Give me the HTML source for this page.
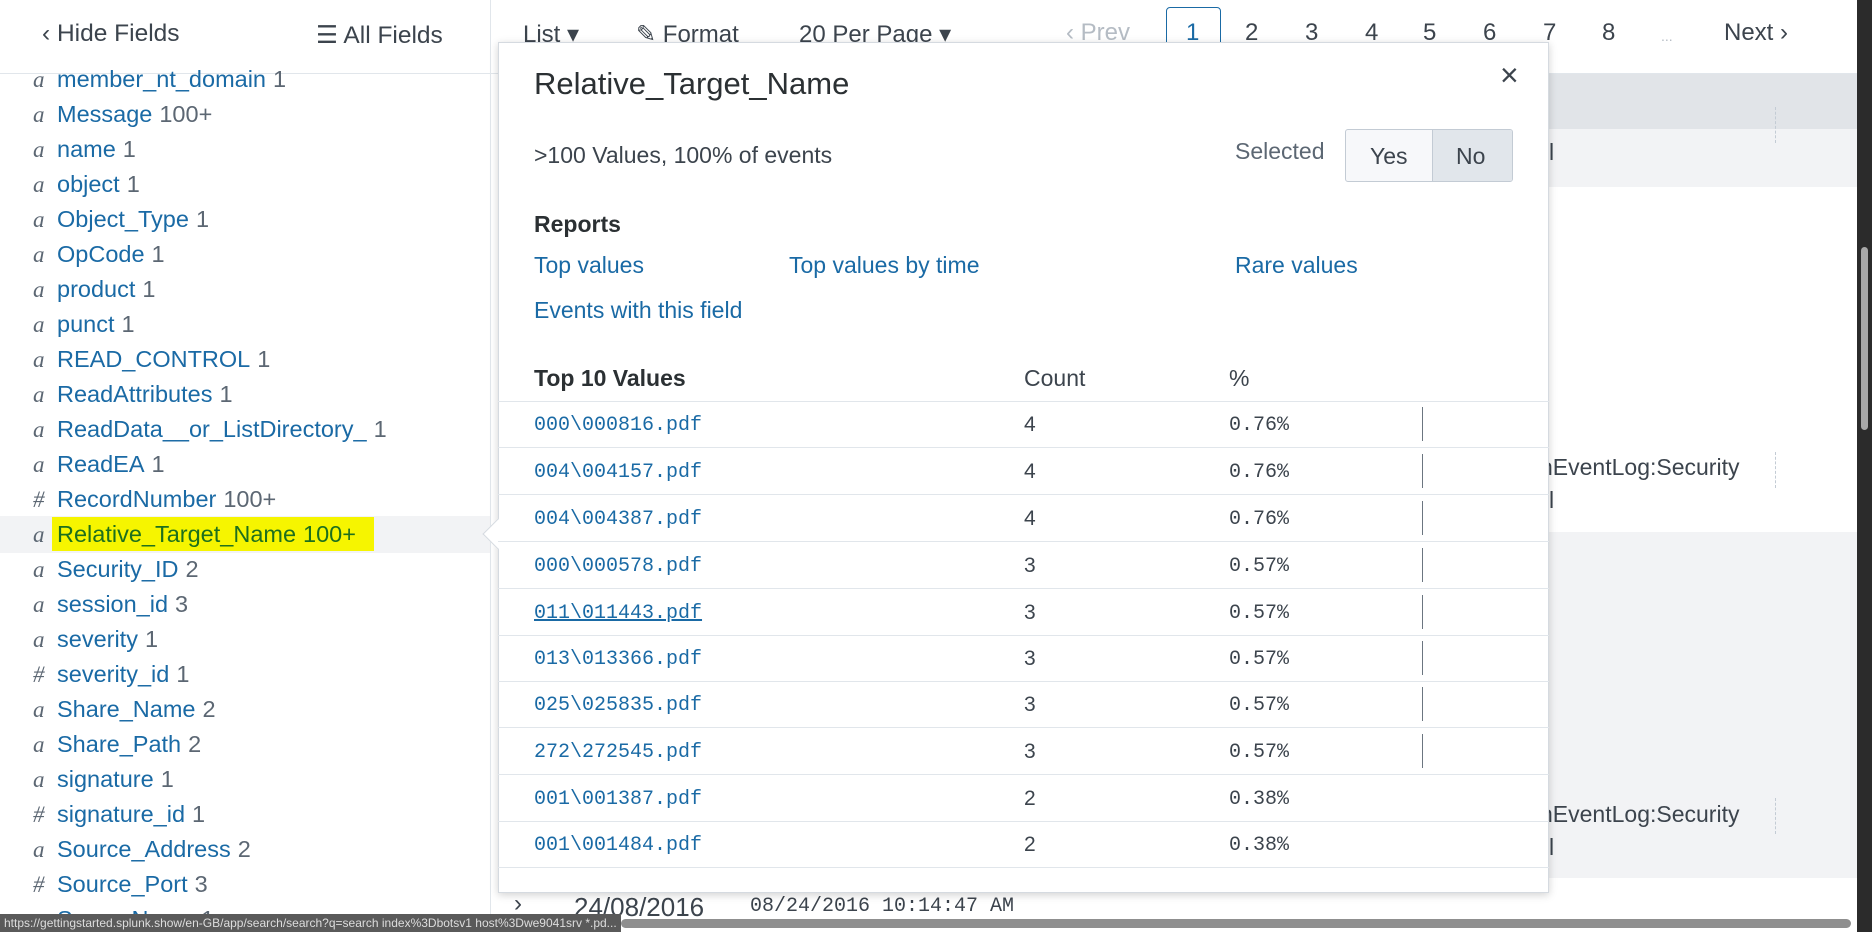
<!DOCTYPE html>
<html><head><meta charset="utf-8"><style>
*{margin:0;padding:0;box-sizing:border-box}
body{width:1872px;height:932px;overflow:hidden;background:#fff;font-family:"Liberation Sans",sans-serif;color:#3c444d;position:relative}
.a{position:absolute;white-space:nowrap}
.lnk{color:#1a6aa5}
.mono{font-family:"Liberation Mono",monospace}
.f{position:absolute;left:33px;font-size:23.5px;line-height:35px;height:35px;white-space:nowrap}
.f i{font-family:"Liberation Serif",serif;color:#5c6773;font-size:23px;margin-right:8px;display:inline-block;width:16px}
.f b{font-weight:normal;color:#1a6aa5}
.f s{text-decoration:none;color:#5c6773;margin-left:7px}
.row{position:absolute;left:498px;width:1051px;border-bottom:1px solid #e1e6eb;height:47px}
.row .v{position:absolute;left:36px;top:13px;font-size:20px;color:#1a6aa5}
.row .c{position:absolute;left:526px;top:12px;font-size:21px}
.row .p{position:absolute;left:731px;top:13px;font-size:20px}
.row .bar{position:absolute;left:924px;top:6px;width:1px;height:34px;background:#6b7580}
.pg{position:absolute;top:19px;font-size:24px;color:#3c444d}
.t{font-size:23px}
</style></head><body>
<div class="a" style="left:1549px;top:74px;width:308px;height:55px;background:#e1e4e8"></div>
<div class="a" style="left:1549px;top:129px;width:308px;height:58px;background:#f2f3f5"></div>
<div class="a" style="left:1549px;top:532px;width:308px;height:346px;background:#f2f3f5"></div>
<div class="a" style="left:1549px;top:139px;font-size:23px">l</div>
<div class="a" style="left:1540px;top:454px;font-size:23px">nEventLog:Security</div>
<div class="a" style="left:1549px;top:487px;font-size:23px">l</div>
<div class="a" style="left:1540px;top:801px;font-size:23px">nEventLog:Security</div>
<div class="a" style="left:1549px;top:834px;font-size:23px">l</div>
<div class="a" style="left:1775px;top:452px;height:36px;border-left:1px dashed #c3cbd4"></div>
<div class="a" style="left:1775px;top:798px;height:36px;border-left:1px dashed #c3cbd4"></div>
<div class="a" style="left:1775px;top:107px;height:36px;border-left:1px dashed #c3cbd4"></div>
<div class="a" style="left:0;top:73px;width:1857px;height:1px;background:#e1e6eb"></div>
<div class="a" style="left:490px;top:0;width:1px;height:932px;background:#e1e6eb"></div>
<div class="a" style="left:42px;top:20px;font-size:24.5px">‹ Hide Fields</div>
<div class="a" style="left:316px;top:20px;font-size:24.5px">☰ All Fields</div>
<div class="a" style="left:523px;top:20px;font-size:24px">List ▾</div>
<div class="a" style="left:636px;top:20px;font-size:24px">✎ Format</div>
<div class="a" style="left:799px;top:20px;font-size:24px">20 Per Page ▾</div>
<div class="pg" style="left:1066px;color:#b5bcc4">‹ Prev</div>
<div class="a" style="left:1166px;top:7px;width:55px;height:60px;border:1px solid #1a6aa5;border-radius:4px"></div>
<div class="pg" style="left:1186px;color:#1a6aa5">1</div>
<div class="pg" style="left:1245px">2</div><div class="pg" style="left:1305px">3</div><div class="pg" style="left:1365px">4</div><div class="pg" style="left:1423px">5</div><div class="pg" style="left:1483px">6</div><div class="pg" style="left:1543px">7</div><div class="pg" style="left:1602px">8</div>
<div class="pg" style="left:1661px;color:#b5bcc4;font-size:14px;top:28px">...</div>
<div class="pg" style="left:1724px">Next ›</div>
<div class="a" style="left:0;top:516px;width:490px;height:37px;background:#f2f3f5"></div>
<div class="a" style="left:52px;top:517px;width:322px;height:34px;background:#f6f500"></div>
<div class="f" style="top:62px"><i>a</i><b>member_nt_domain</b><s>1</s></div>
<div class="f" style="top:97px"><i>a</i><b>Message</b><s>100+</s></div>
<div class="f" style="top:132px"><i>a</i><b>name</b><s>1</s></div>
<div class="f" style="top:167px"><i>a</i><b>object</b><s>1</s></div>
<div class="f" style="top:202px"><i>a</i><b>Object_Type</b><s>1</s></div>
<div class="f" style="top:237px"><i>a</i><b>OpCode</b><s>1</s></div>
<div class="f" style="top:272px"><i>a</i><b>product</b><s>1</s></div>
<div class="f" style="top:307px"><i>a</i><b>punct</b><s>1</s></div>
<div class="f" style="top:342px"><i>a</i><b>READ_CONTROL</b><s>1</s></div>
<div class="f" style="top:377px"><i>a</i><b>ReadAttributes</b><s>1</s></div>
<div class="f" style="top:412px"><i>a</i><b>ReadData__or_ListDirectory_</b><s>1</s></div>
<div class="f" style="top:447px"><i>a</i><b>ReadEA</b><s>1</s></div>
<div class="f" style="top:482px"><i>#</i><b>RecordNumber</b><s>100+</s></div>
<div class="f" style="top:517px"><i>a</i><b style="color:#1d6f1d">Relative_Target_Name</b><s style="color:#1d6f1d">100+</s></div>
<div class="f" style="top:552px"><i>a</i><b>Security_ID</b><s>2</s></div>
<div class="f" style="top:587px"><i>a</i><b>session_id</b><s>3</s></div>
<div class="f" style="top:622px"><i>a</i><b>severity</b><s>1</s></div>
<div class="f" style="top:657px"><i>#</i><b>severity_id</b><s>1</s></div>
<div class="f" style="top:692px"><i>a</i><b>Share_Name</b><s>2</s></div>
<div class="f" style="top:727px"><i>a</i><b>Share_Path</b><s>2</s></div>
<div class="f" style="top:762px"><i>a</i><b>signature</b><s>1</s></div>
<div class="f" style="top:797px"><i>#</i><b>signature_id</b><s>1</s></div>
<div class="f" style="top:832px"><i>a</i><b>Source_Address</b><s>2</s></div>
<div class="f" style="top:867px"><i>#</i><b>Source_Port</b><s>3</s></div>
<div class="f" style="top:902px"><i>a</i><b>SourceName</b><s>1</s></div>
<div class="a" style="left:514px;top:890px;font-size:24px">›</div>
<div class="a" style="left:574px;top:892px;font-size:26px">24/08/2016</div>
<div class="a mono" style="left:750px;top:895px;font-size:20px">08/24/2016 10:14:47 AM</div>
<div class="a" style="left:498px;top:42px;width:1051px;height:851px;background:#fff;border:1px solid #d5dae0;box-shadow:0 2px 8px rgba(0,0,0,.18)"></div>
<div class="a" style="left:487px;top:523px;width:22px;height:22px;background:#fff;border-left:1px solid #d5dae0;border-bottom:1px solid #d5dae0;transform:rotate(45deg)"></div>
<div class="a" style="left:534px;top:66px;font-size:31px;color:#2b3033">Relative_Target_Name</div>
<div class="a" style="left:1500px;top:57px;font-size:32px;color:#3c444d">×</div>
<div class="a t" style="left:534px;top:142px">&gt;100 Values, 100% of events</div>
<div class="a t" style="left:1235px;top:138px;color:#5c6773">Selected</div>
<div class="a" style="left:1345px;top:129px;width:168px;height:53px;border:1px solid #c3cbd4;border-radius:3px;background:#f7f8fa;overflow:hidden">
<div class="a" style="left:86px;top:0;width:82px;height:53px;background:#e1e6eb;border-left:1px solid #c3cbd4"></div>
<div class="a t" style="left:24px;top:13px">Yes</div>
<div class="a t" style="left:110px;top:13px">No</div></div>
<div class="a t" style="left:534px;top:211px;font-weight:bold;color:#2b3033">Reports</div>
<div class="a lnk t" style="left:534px;top:252px">Top values</div>
<div class="a lnk t" style="left:789px;top:252px">Top values by time</div>
<div class="a lnk t" style="left:1235px;top:252px">Rare values</div>
<div class="a lnk t" style="left:534px;top:297px">Events with this field</div>
<div class="a t" style="left:534px;top:365px;font-weight:bold;color:#2b3033">Top 10 Values</div>
<div class="a t" style="left:1024px;top:365px">Count</div>
<div class="a t" style="left:1229px;top:365px">%</div>
<div class="a" style="left:498px;top:401px;width:1051px;height:1px;background:#e1e6eb"></div>
<div class="row" style="top:401px"><span class="a v mono">000\000816.pdf</span><span class="a c">4</span><span class="a p mono">0.76%</span><span class="bar"></span></div>
<div class="row" style="top:448px"><span class="a v mono">004\004157.pdf</span><span class="a c">4</span><span class="a p mono">0.76%</span><span class="bar"></span></div>
<div class="row" style="top:495px"><span class="a v mono">004\004387.pdf</span><span class="a c">4</span><span class="a p mono">0.76%</span><span class="bar"></span></div>
<div class="row" style="top:542px"><span class="a v mono">000\000578.pdf</span><span class="a c">3</span><span class="a p mono">0.57%</span><span class="bar"></span></div>
<div class="row" style="top:589px"><span class="a v mono" style="text-decoration:underline">011\011443.pdf</span><span class="a c">3</span><span class="a p mono">0.57%</span><span class="bar"></span></div>
<div class="row" style="top:635px"><span class="a v mono">013\013366.pdf</span><span class="a c">3</span><span class="a p mono">0.57%</span><span class="bar"></span></div>
<div class="row" style="top:681px"><span class="a v mono">025\025835.pdf</span><span class="a c">3</span><span class="a p mono">0.57%</span><span class="bar"></span></div>
<div class="row" style="top:728px"><span class="a v mono">272\272545.pdf</span><span class="a c">3</span><span class="a p mono">0.57%</span><span class="bar"></span></div>
<div class="row" style="top:775px"><span class="a v mono">001\001387.pdf</span><span class="a c">2</span><span class="a p mono">0.38%</span></div>
<div class="row" style="top:821px"><span class="a v mono">001\001484.pdf</span><span class="a c">2</span><span class="a p mono">0.38%</span></div>
<div class="a" style="left:1857px;top:0;width:15px;height:932px;background:#2b2b2b"></div>
<div class="a" style="left:1861px;top:247px;width:7px;height:183px;background:#a8a8a8;border-radius:4px"></div>
<div class="a" style="left:621px;top:919px;width:1230px;height:9px;background:#8f8f8f;border-radius:5px"></div>
<div class="a" style="left:0;top:914px;width:621px;height:18px;background:#5a5a5a;color:#ddd;font-size:12px;line-height:18px;padding-left:4px;overflow:hidden">https://gettingstarted.splunk.show/en-GB/app/search/search?q=search index%3Dbotsv1 host%3Dwe9041srv *.pd...</div>
</body></html>
